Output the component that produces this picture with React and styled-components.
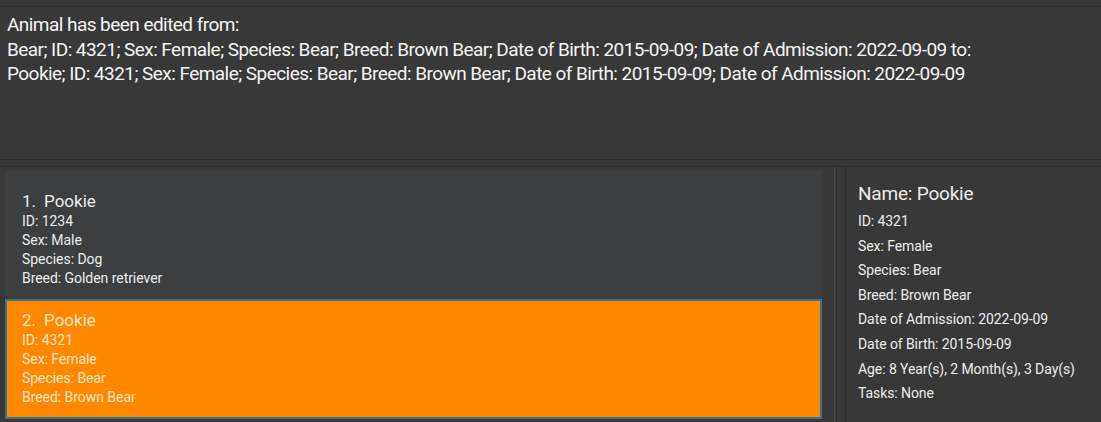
import { createGlobalStyle, styled } from "styled-components";

const GlobalStyle = createGlobalStyle`
  html, body {
    margin: 0;
    padding: 0;
    background-color: #383838;
  }
  body {
    font-family: Roboto, "Open Sans", "Liberation Sans", sans-serif;
    -webkit-font-smoothing: antialiased;
    overflow: hidden;
  }
`;

const Window = styled.div`
  width: 1101px;
  height: 422px;
  display: flex;
  flex-direction: column;
  background-color: #383838;
  overflow: hidden;
`;

const TopStrip = styled.div`
  height: 6px;
  background-color: #363636;
  border-bottom: 1px solid #2b2b2b;
`;

const ResultDisplay = styled.div`
  height: 152px;
  box-sizing: border-box;
  padding: 6px 7px;
  color: #f4f4f4;
  font-size: 19px;
  line-height: 24.5px;
  letter-spacing: -0.55px;
  white-space: nowrap;
`;

const Splitter = styled.div`
  height: 6px;
  border-top: 1px solid #2b2b2b;
  border-bottom: 1px solid #2b2b2b;
  background-color: #363636;
`;

const MainRow = styled.div`
  flex: 1;
  display: flex;
  min-height: 0;
`;

const ListPanel = styled.div`
  width: 834px;
  box-sizing: border-box;
  padding: 4px 12px 0 5px;
  display: flex;
  flex-direction: column;
`;

const Card = styled.div`
  flex-shrink: 0;
  box-sizing: border-box;
  height: ${(p) => p.$height}px;
  padding: ${(p) => p.$padTop}px 0 0 ${(p) => (p.$selected ? 15 : 17)}px;
  background-color: ${(p) => (p.$selected ? "#ff8800" : "#3c3e40")};
  border: ${(p) => (p.$selected ? "2px solid #3b7489" : "none")};
  color: ${(p) => (p.$selected ? "rgba(255, 255, 255, 0.8)" : "#ececec")};
`;

const CardTitle = styled.div`
  display: flex;
  gap: 8px;
  font-size: 17px;
  line-height: 21px;
`;

const CardLine = styled.div`
  font-size: 14px;
  line-height: 19px;
  letter-spacing: -0.05px;
`;

const Divider = styled.div`
  width: 10px;
  border-left: 1px solid #4c4c4c;
  border-right: 1px solid #2b2b2b;
  background-image: linear-gradient(#2e2e2e, #2e2e2e);
  background-size: 1px 100%;
  background-position: 1px 0;
  background-repeat: no-repeat;
`;

const DetailsPanel = styled.div`
  flex: 1;
  padding: 15px 0 0 12px;
  color: #ececec;
`;

const DetailsName = styled.div`
  font-size: 19px;
  line-height: 24px;
  margin-bottom: 3px;
  letter-spacing: -0.2px;
`;

const DetailsLine = styled.div`
  font-size: 14px;
  line-height: 24.6px;
  letter-spacing: -0.08px;
`;

const animals = [
  { index: 1, name: "Pookie", id: "1234", sex: "Male", species: "Dog", breed: "Golden retriever" },
  { index: 2, name: "Pookie", id: "4321", sex: "Female", species: "Bear", breed: "Brown Bear" },
];

const details = [
  "ID: 4321",
  "Sex: Female",
  "Species: Bear",
  "Breed: Brown Bear",
  "Date of Admission: 2022-09-09",
  "Date of Birth: 2015-09-09",
  "Age: 8 Year(s), 2 Month(s), 3 Day(s)",
  "Tasks: None",
];

function App() {
  return (
    <>
      <GlobalStyle />
      <Window>
        <TopStrip />
        <ResultDisplay>
          <div>Animal has been edited from:</div>
          <div>
            Bear; ID: 4321; Sex: Female; Species: Bear; Breed: Brown Bear; Date of Birth: 2015-09-09; Date of
            Admission: 2022-09-09 to:
          </div>
          <div>
            Pookie; ID: 4321; Sex: Female; Species: Bear; Breed: Brown Bear; Date of Birth: 2015-09-09; Date of
            Admission: 2022-09-09
          </div>
        </ResultDisplay>
        <Splitter />
        <MainRow>
          <ListPanel>
            {animals.map((a) => {
              const selected = a.index === 2;
              return (
                <Card
                  key={a.index}
                  $selected={selected}
                  $height={selected ? 120 : 128}
                  $padTop={selected ? 9 : 20}
                >
                  <CardTitle>
                    <span>{a.index}.</span>
                    <span>{a.name}</span>
                  </CardTitle>
                  <CardLine>ID: {a.id}</CardLine>
                  <CardLine>Sex: {a.sex}</CardLine>
                  <CardLine>Species: {a.species}</CardLine>
                  <CardLine>Breed: {a.breed}</CardLine>
                </Card>
              );
            })}
          </ListPanel>
          <Divider />
          <DetailsPanel>
            <DetailsName>Name: Pookie</DetailsName>
            {details.map((d) => (
              <DetailsLine key={d}>{d}</DetailsLine>
            ))}
          </DetailsPanel>
        </MainRow>
      </Window>
    </>
  );
}

export default App;
